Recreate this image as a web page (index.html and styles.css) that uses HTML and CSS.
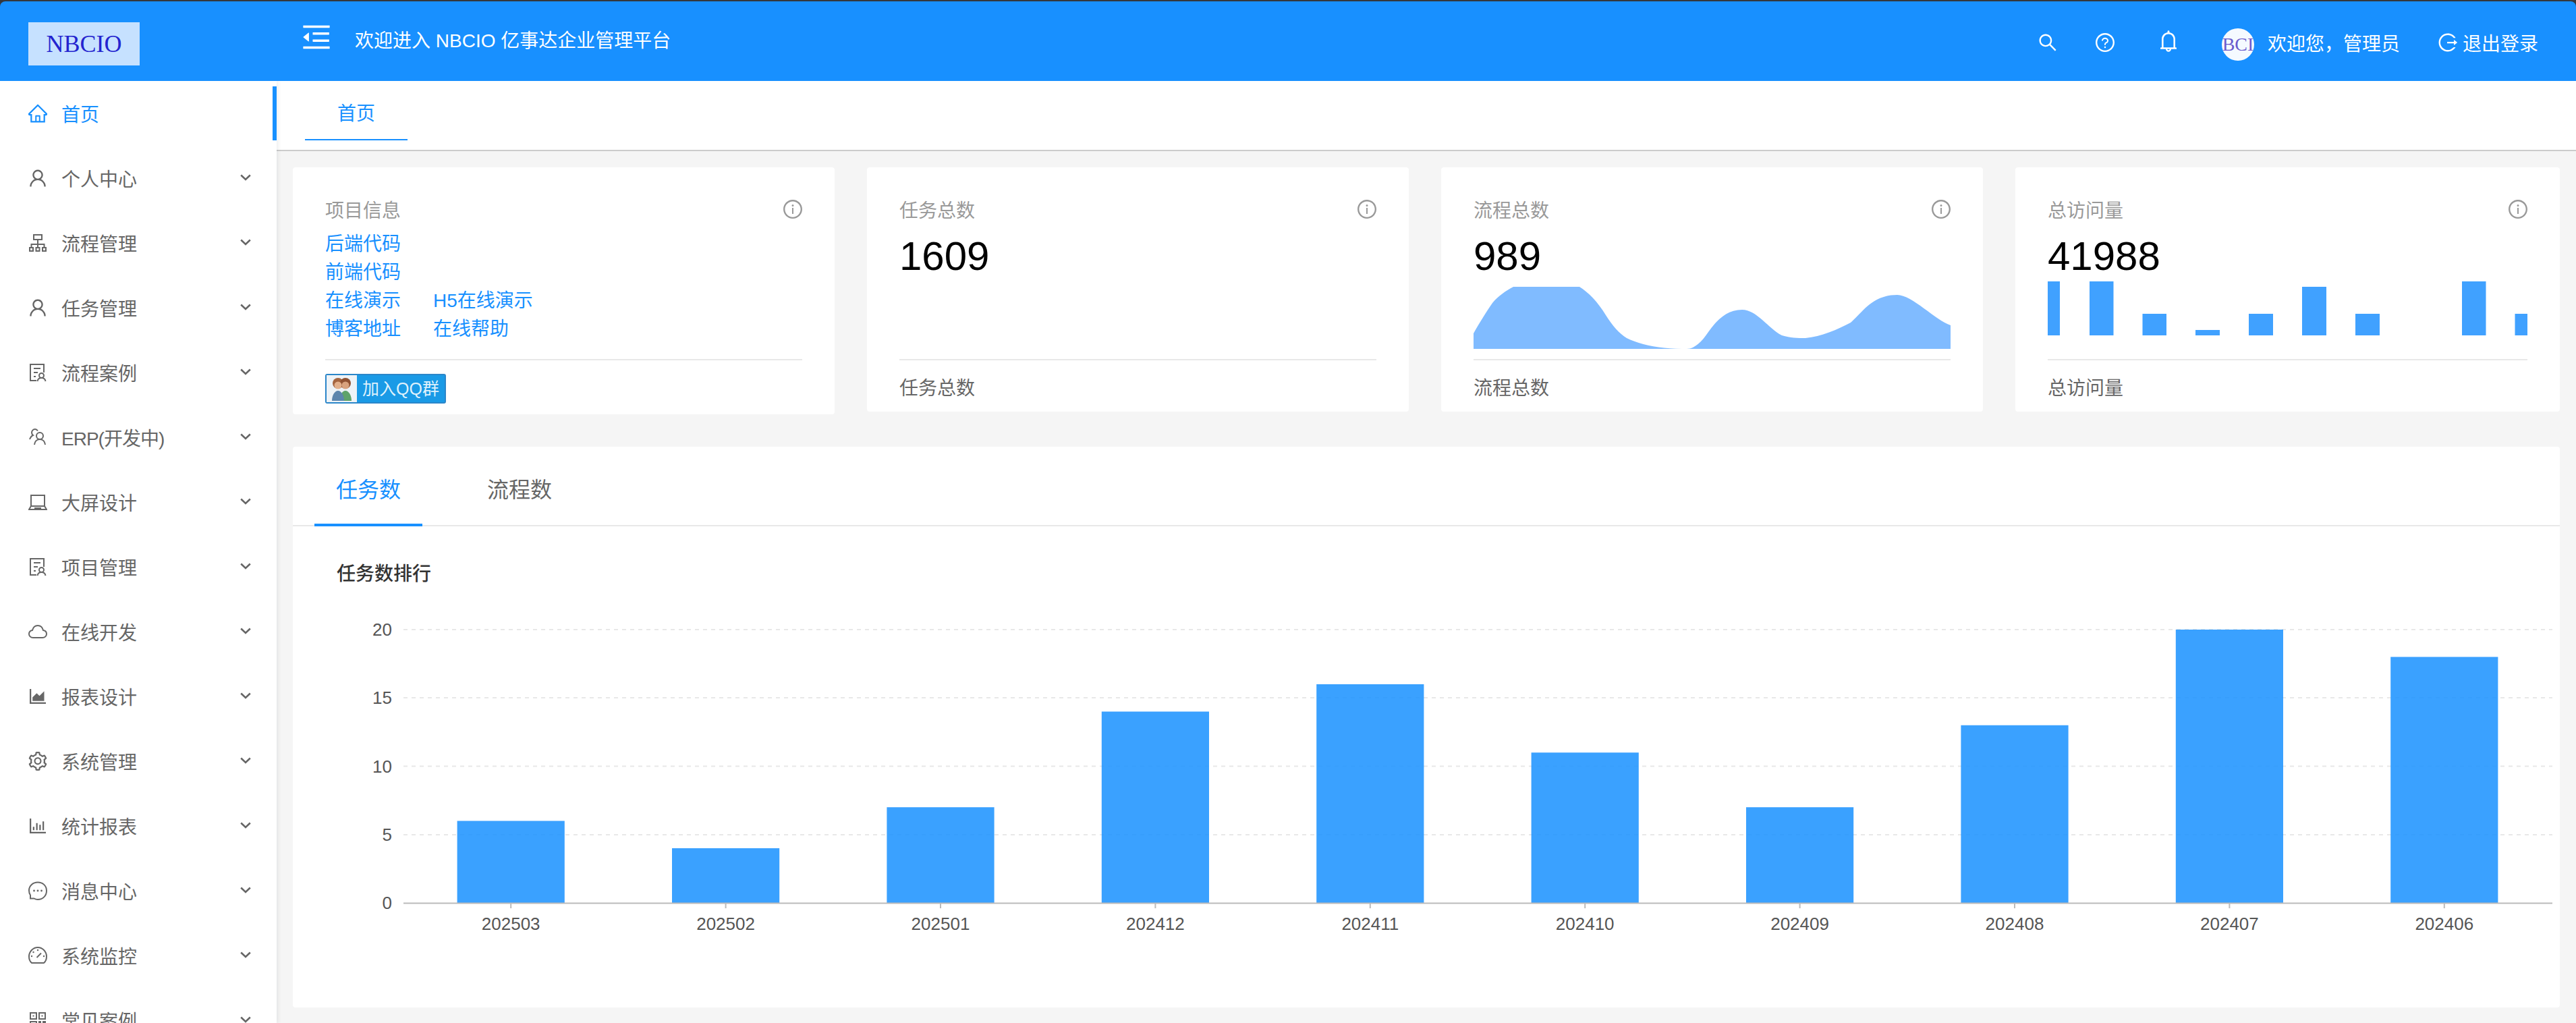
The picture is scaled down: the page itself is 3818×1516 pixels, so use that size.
FILE: index.html
```html
<!DOCTYPE html>
<html>
<head>
	<meta charset="utf-8">
	<title>NBCIO 亿事达企业管理平台</title>
	<link rel="stylesheet" href="styles.css">
</head>
<body>

	<!-- icon sprite -->
	<svg class="sprite" xmlns="http://www.w3.org/2000/svg">
		<symbol id="i-home" viewBox="64 64 896 896"><path d="M946.5 505L560.1 118.8l-25.9-25.9a31.5 31.5 0 0 0-44.4 0L77.5 505a63.9 63.9 0 0 0-18.8 46c.4 35.2 29.7 63.3 64.9 63.3h42.5V940h691.8V614.3h43.4c17.1 0 33.2-6.7 45.3-18.8a63.6 63.6 0 0 0 18.7-45.3c0-17-6.7-33.1-18.8-45.2zM568 868H456V664h112v204zm217.9-325.7V868H632V640c0-22.1-17.9-40-40-40H432c-22.1 0-40 17.9-40 40v228H238.1V542.3h-96l370-369.7 23.1 23.1L882 542.3h-96.1z"/></symbol>
		<symbol id="i-user" viewBox="64 64 896 896"><path d="M858.5 763.6a374 374 0 0 0-80.6-119.5 375.63 375.63 0 0 0-119.5-80.6c-.4-.2-.8-.3-1.2-.5C719.5 518 760 444.7 760 362c0-137-111-248-248-248S264 225 264 362c0 82.7 40.5 156 102.8 201.1-.4.2-.8.3-1.2.5-44.8 18.9-85 46-119.5 80.6a375.63 375.63 0 0 0-80.6 119.5A371.7 371.7 0 0 0 136 901.8a8 8 0 0 0 8 8.2h60c4.4 0 7.9-3.5 8-7.8 2-77.2 33-149.5 87.8-204.3 56.7-56.7 132-87.9 212.2-87.9s155.5 31.2 212.2 87.9C779 752.7 810 825 812 902.2c.1 4.4 3.6 7.8 8 7.8h60a8 8 0 0 0 8-8.2c-1-47.8-10.9-94.3-29.5-138.2zM512 534c-45.9 0-89.1-17.9-121.6-50.4S340 407.9 340 362c0-45.9 17.9-89.1 50.4-121.6S466.1 190 512 190s89.1 17.9 121.6 50.4S684 316.1 684 362c0 45.9-17.9 89.1-50.4 121.6S557.9 534 512 534z"/></symbol>
		<symbol id="i-apartment" viewBox="0 0 28 28"><path fill="none" stroke="currentColor" stroke-width="2" d="M8 2h12v7H8zM14 9v5M4.5 21v-5h19v5M14 14v7M2 21h5v5H2zM11.5 21h5v5h-5zM21 21h5v5h-5z"/></symbol>
		<symbol id="i-solution" viewBox="0 0 28 28"><path fill="none" stroke="currentColor" stroke-width="2" d="M12 26H3V2h20v12M8 8h10M8 14h6M8 20h3"/><circle cx="19.5" cy="18.5" r="3.5" fill="none" stroke="currentColor" stroke-width="2"/><path fill="none" stroke="currentColor" stroke-width="2" d="M13.5 27c.5-3 3-5 6-5s5.500 2 6 5"/></symbol>
		<symbol id="i-team" viewBox="0 0 28 28"><circle cx="17" cy="12" r="5" fill="none" stroke="currentColor" stroke-width="2"/><path fill="none" stroke="currentColor" stroke-width="2" d="M9 25c.5-4.500 3.500-8 8-8s7.500 3.500 8 8M14 4.500C13 3 11.500 2 10 2 7 2 5 4.500 5 7c0 1.500.5 3 2 4-2.500 1-4 3.500-5 6"/></symbol>
		<symbol id="i-laptop" viewBox="0 0 28 28"><path fill="none" stroke="currentColor" stroke-width="2" d="M4 20V4h20v16M1 25l3-5h20l3 5zM10 25v-2h8v2"/></symbol>
		<symbol id="i-cloud" viewBox="0 0 28 28"><path fill="none" stroke="currentColor" stroke-width="2" d="M7 23C3.500 23 1 20.500 1 17.500S3.500 12.500 6 12c1-4 4-7 8-7s7 3 8 7c3 .5 5 2.500 5 5.500S24.500 23 21 23z"/></symbol>
		<symbol id="i-area" viewBox="64 64 896 896"><path d="M888 792H200V168c0-4.400-3.600-8-8-8h-56c-4.400 0-8 3.600-8 8v688c0 4.400 3.600 8 8 8h752c4.400 0 8-3.600 8-8v-56c0-4.400-3.600-8-8-8zm-616-64h536c4.400 0 8-3.600 8-8V284c0-7.200-8.700-10.700-13.800-5.700L592 488.600l-125.400-124a8.030 8.030 0 0 0-11.300 0l-189 189.600a7.870 7.870 0 0 0-2.300 5.600V720c0 4.400 3.600 8 8 8z"/></symbol>
		<symbol id="i-setting" viewBox="64 64 896 896"><path d="M924.8 625.7l-65.5-56c3.100-19 4.700-38.400 4.700-57.800s-1.600-38.800-4.700-57.800l65.500-56a32.030 32.030 0 0 0 9.300-35.200l-.9-2.600a443.740 443.740 0 0 0-79.700-137.900l-1.800-2.100a32.120 32.120 0 0 0-35.100-9.500l-81.300 28.900c-30-24.600-63.500-44-99.700-57.600l-15.700-85a32.050 32.050 0 0 0-25.800-25.700l-2.700-.5c-52.100-9.400-106.900-9.400-159 0l-2.700.5a32.050 32.050 0 0 0-25.800 25.700l-15.800 85.400a351.860 351.860 0 0 0-99 57.400l-81.900-29.100a32 32 0 0 0-35.100 9.500l-1.800 2.100a446.020 446.020 0 0 0-79.700 137.900l-.9 2.600c-4.500 12.500-.8 26.500 9.300 35.200l66.300 56.600c-3.100 18.800-4.600 38-4.600 57.100 0 19.200 1.500 38.400 4.600 57.100L99 625.500a32.030 32.030 0 0 0-9.300 35.200l.9 2.600c18.100 50.400 44.900 96.900 79.700 137.900l1.800 2.100a32.120 32.120 0 0 0 35.100 9.500l81.900-29.100c29.800 24.500 63.100 43.900 99 57.400l15.800 85.400a32.050 32.050 0 0 0 25.800 25.700l2.700.5a449.400 449.400 0 0 0 159 0l2.700-.5a32.050 32.050 0 0 0 25.800-25.700l15.700-85a350 350 0 0 0 99.700-57.600l81.300 28.900a32 32 0 0 0 35.100-9.500l1.800-2.100c34.800-41.100 61.600-87.500 79.700-137.900l.9-2.600c4.500-12.300.8-26.300-9.300-35zM788.300 465.900c2.500 15.100 3.800 30.600 3.800 46.100s-1.300 31-3.800 46.100l-6.600 40.100 74.700 63.900a370.030 370.030 0 0 1-42.600 73.600L721 702.800l-31.400 25.800c-23.900 19.600-50.500 35-79.300 45.800l-38.100 14.300-17.900 97a377.500 377.500 0 0 1-85 0l-17.900-97.200-37.800-14.500c-28.500-10.800-55-26.200-78.700-45.700l-31.400-25.900-93.400 33.200c-17-22.900-31.200-47.600-42.600-73.600l75.500-64.500-6.500-40c-2.400-14.900-3.700-30.300-3.700-45.500 0-15.300 1.200-30.600 3.700-45.500l6.500-40-75.500-64.500c11.300-26.100 25.600-50.700 42.600-73.600l93.400 33.200 31.400-25.900c23.700-19.500 50.200-34.900 78.700-45.700l37.900-14.300 17.900-97.200c28.100-3.200 56.800-3.200 85 0l17.900 97 38.100 14.300c28.700 10.800 55.400 26.200 79.300 45.800l31.400 25.800 92.800-32.900c17 22.900 31.200 47.600 42.600 73.600L781.800 426l6.500 39.900zM512 326c-97.200 0-176 78.800-176 176s78.800 176 176 176 176-78.800 176-176-78.800-176-176-176zm79.200 255.200A111.600 111.600 0 0 1 512 614c-29.900 0-58-11.700-79.200-32.800A111.600 111.600 0 0 1 400 502c0-29.900 11.700-58 32.800-79.200C454 401.600 482.100 390 512 390c29.900 0 58 11.600 79.200 32.800A111.600 111.600 0 0 1 624 502c0 29.900-11.700 58-32.800 79.200z"/></symbol>
		<symbol id="i-bar" viewBox="64 64 896 896"><path d="M888 792H200V168c0-4.400-3.600-8-8-8h-56c-4.400 0-8 3.600-8 8v688c0 4.400 3.600 8 8 8h752c4.400 0 8-3.600 8-8v-56c0-4.400-3.600-8-8-8zm-600-80h56c4.400 0 8-3.600 8-8V560c0-4.400-3.600-8-8-8h-56c-4.400 0-8 3.600-8 8v144c0 4.400 3.600 8 8 8zm152 0h56c4.400 0 8-3.600 8-8V384c0-4.400-3.600-8-8-8h-56c-4.400 0-8 3.600-8 8v320c0 4.400 3.600 8 8 8zm152 0h56c4.400 0 8-3.600 8-8V462c0-4.400-3.600-8-8-8h-56c-4.400 0-8 3.600-8 8v242c0 4.400 3.600 8 8 8zm152 0h56c4.400 0 8-3.600 8-8V304c0-4.400-3.600-8-8-8h-56c-4.400 0-8 3.600-8 8v400c0 4.400 3.600 8 8 8z"/></symbol>
		<symbol id="i-message" viewBox="0 0 28 28"><path fill="none" stroke="currentColor" stroke-width="2" d="M14 1.500C6.800 1.500 1 6.800 1 13.500c0 3 .6 5 2 7v5h5.500c1.700 1 3.500 1.500 5.500 1.500 7.200 0 13-5.300 13-13S21.200 1.500 14 1.500z"/><circle cx="8.500" cy="14" r="1.400" fill="currentColor"/><circle cx="14" cy="14" r="1.400" fill="currentColor"/><circle cx="19.500" cy="14" r="1.400" fill="currentColor"/></symbol>
		<symbol id="i-dashboard" viewBox="0 0 28 28"><path fill="none" stroke="currentColor" stroke-width="2" d="M5 25C2.500 23 1 19 1 15.500 1 8 7 2 14 2s13 6 13 13.500c0 3.500-1.500 7.500-4 9.500z"/><path fill="none" stroke="currentColor" stroke-width="2" d="M12.500 17L19 10.500"/><circle cx="14" cy="6" r="1.200" fill="currentColor"/><circle cx="7.500" cy="9" r="1.200" fill="currentColor"/><circle cx="5" cy="15" r="1.200" fill="currentColor"/><circle cx="23" cy="15" r="1.200" fill="currentColor"/></symbol>
		<symbol id="i-qrcode" viewBox="0 0 28 28"><path fill="none" stroke="currentColor" stroke-width="2" d="M3 3h9v9H3zM16 3h9v9h-9zM3 16h9v9H3z"/><path fill="currentColor" d="M6.500 6.500h2v2h-2zM19.500 6.500h2v2h-2zM6.500 19.500h2v2h-2zM15 15h4v4h-4zM21 15h5v3h-5zM15 21h4v5h-4zM21 21h5v5h-5z"/></symbol>
		<symbol id="i-down" viewBox="0 0 16 12"><path fill="none" stroke="currentColor" stroke-width="2.600" d="M1.200 2.500L8 9l6.800-6.500"/></symbol>
		<symbol id="i-info" viewBox="64 64 896 896"><path d="M512 64C264.600 64 64 264.600 64 512s200.600 448 448 448 448-200.600 448-448S759.400 64 512 64zm0 820c-205.400 0-372-166.600-372-372s166.600-372 372-372 372 166.600 372 372-166.600 372-372 372z"/><path d="M464 336a48 48 0 1 0 96 0 48 48 0 1 0-96 0zm72 112h-48c-4.400 0-8 3.600-8 8v272c0 4.400 3.600 8 8 8h48c4.400 0 8-3.600 8-8V456c0-4.400-3.600-8-8-8z"/></symbol>
		<symbol id="i-outdent" viewBox="64 64 896 896"><path d="M408 442h480c4.400 0 8-3.600 8-8v-56c0-4.400-3.600-8-8-8H408c-4.400 0-8 3.600-8 8v56c0 4.400 3.600 8 8 8zm-8 204c0 4.400 3.600 8 8 8h480c4.400 0 8-3.600 8-8v-56c0-4.400-3.600-8-8-8H408c-4.400 0-8 3.600-8 8v56zm504-486H120c-4.400 0-8 3.600-8 8v56c0 4.400 3.600 8 8 8h784c4.400 0 8-3.600 8-8v-56c0-4.400-3.600-8-8-8zm0 632H120c-4.400 0-8 3.600-8 8v56c0 4.400 3.600 8 8 8h784c4.400 0 8-3.600 8-8v-56c0-4.400-3.600-8-8-8zM115.400 518.900L271.700 642c5.800 4.600 14.400.5 14.400-6.900V388.900c0-7.400-8.500-11.500-14.400-6.900L115.400 505.100a8.740 8.740 0 0 0 0 13.800z"/></symbol>
		<symbol id="i-search" viewBox="64 64 896 896"><path d="M909.600 854.500L649.900 594.800C690.200 542.700 712 479 712 412c0-80.200-31.300-155.400-87.900-212.100-56.600-56.700-132-87.900-212.100-87.900s-155.500 31.300-212.100 87.900C143.200 256.500 112 331.800 112 412c0 80.100 31.300 155.500 87.900 212.100C256.500 680.800 331.800 712 412 712c67 0 130.600-21.800 182.700-62l259.700 259.600a8.200 8.200 0 0 0 11.600 0l43.600-43.500a8.200 8.200 0 0 0 0-11.600zM570.400 570.400C528 612.700 471.800 636 412 636s-116-23.300-158.400-65.600C211.300 528 188 471.800 188 412s23.300-116.100 65.600-158.400C296 211.300 352.200 188 412 188s116.100 23.200 158.400 65.600S636 352.200 636 412s-23.300 116.100-65.600 158.400z"/></symbol>
		<symbol id="i-question" viewBox="64 64 896 896"><path d="M512 64C264.600 64 64 264.600 64 512s200.600 448 448 448 448-200.600 448-448S759.400 64 512 64zm0 820c-205.400 0-372-166.600-372-372s166.600-372 372-372 372 166.600 372 372-166.600 372-372 372z"/><path d="M623.600 316.700C593.600 290.400 554 276 512 276s-81.600 14.500-111.600 40.700C369.200 344 352 380.700 352 420v7.600c0 4.400 3.600 8 8 8h48c4.400 0 8-3.600 8-8V420c0-44.100 43.100-80 96-80s96 35.900 96 80c0 31.100-22 59.600-56.100 72.700-21.200 8.100-39.200 22.300-52.100 40.900-13.100 19-19.900 41.800-19.900 64.900V620c0 4.400 3.600 8 8 8h48c4.400 0 8-3.600 8-8v-22.700a48.300 48.300 0 0 1 30.900-44.800c59-22.700 97.100-74.700 97.100-132.500.1-39.300-17.100-76-48.300-103.300zM472 732a40 40 0 1 0 80 0 40 40 0 1 0-80 0z"/></symbol>
		<symbol id="i-bell" viewBox="64 64 896 896"><path d="M816 768h-24V428c0-141.100-104.300-257.700-240-277.100V112c0-22.100-17.900-40-40-40s-40 17.900-40 40v38.900c-135.700 19.400-240 136-240 277.100v340h-24c-17.700 0-32 14.300-32 32v32c0 4.400 3.600 8 8 8h216c0 61.800 50.200 112 112 112s112-50.200 112-112h216c4.400 0 8-3.600 8-8v-32c0-17.700-14.300-32-32-32zM512 888c-26.500 0-48-21.500-48-48h96c0 26.500-21.500 48-48 48zM304 768V428c0-55.600 21.600-107.800 60.900-147.100S456.400 220 512 220c55.600 0 107.800 21.600 147.100 60.900S720 372.400 720 428v340H304z"/></symbol>
		<symbol id="i-logout" viewBox="64 64 896 896"><path d="M868 732h-70.300c-4.800 0-9.300 2.100-12.300 5.800-7 8.500-14.500 16.700-22.400 24.500a353.840 353.840 0 0 1-112.700 75.900A352.800 352.800 0 0 1 512.400 866c-47.900 0-94.300-9.400-137.900-27.800a353.840 353.840 0 0 1-112.700-75.900 353.280 353.280 0 0 1-76-112.500C167.300 606.200 158 559.900 158 512s9.400-94.200 27.800-137.800c17.800-42.100 43.400-80 76-112.500s70.500-58.100 112.700-75.900c43.600-18.400 90-27.800 137.900-27.800 47.900 0 94.300 9.300 137.900 27.800 42.200 17.800 80.100 43.400 112.700 75.900 7.900 7.900 15.300 16.100 22.400 24.500 3 3.700 7.600 5.800 12.300 5.800H868c6.300 0 10.200-7 6.700-12.300C798 160.500 663.800 81.600 511.300 82 271.700 82.600 79.600 277.100 82 516.400 84.400 751.900 276.200 942 512.400 942c152.100 0 285.700-78.800 362.300-197.700 3.400-5.300-.4-12.300-6.700-12.300zm88.900-226.300L815 393.700c-5.300-4.200-13-.4-13 6.300v76H488c-4.400 0-8 3.600-8 8v56c0 4.400 3.600 8 8 8h314v76c0 6.700 7.800 10.500 13 6.300l141.900-112a8 8 0 0 0 0-12.600z"/></symbol>
	</svg>

	<!-- top bar -->
	<header class="topbar">
		<div class="logo-box"><span class="logo">NBCIO</span></div>
		<svg class="ico-fold"><use href="#i-outdent"/></svg>
		<div class="welcome">欢迎进入 NBCIO 亿事达企业管理平台</div>
		<div class="actions">
			<svg class="ico-28"><use href="#i-search"/></svg>
			<svg class="ico-28 act-help"><use href="#i-question"/></svg>
			<svg class="ico-bell"><use href="#i-bell"/></svg>
			<div class="avatar"><span>NBCIO</span></div>
			<span class="hello">欢迎您，管理员</span>
			<svg class="ico-28 act-logout"><use href="#i-logout"/></svg>
			<span class="logout-text">退出登录</span>
		</div>
	</header>

	<div class="layout">
		<!-- left menu -->
		<nav class="sider">
			<a class="menu-item active"><svg class="menu-ico"><use href="#i-home"/></svg>首页</a>
			<a class="menu-item"><svg class="menu-ico"><use href="#i-user"/></svg>个人中心<svg class="arrow"><use href="#i-down"/></svg></a>
			<a class="menu-item"><svg class="menu-ico"><use href="#i-apartment"/></svg>流程管理<svg class="arrow"><use href="#i-down"/></svg></a>
			<a class="menu-item"><svg class="menu-ico"><use href="#i-user"/></svg>任务管理<svg class="arrow"><use href="#i-down"/></svg></a>
			<a class="menu-item"><svg class="menu-ico"><use href="#i-solution"/></svg>流程案例<svg class="arrow"><use href="#i-down"/></svg></a>
			<a class="menu-item tight"><svg class="menu-ico"><use href="#i-team"/></svg>ERP(开发中)<svg class="arrow"><use href="#i-down"/></svg></a>
			<a class="menu-item"><svg class="menu-ico"><use href="#i-laptop"/></svg>大屏设计<svg class="arrow"><use href="#i-down"/></svg></a>
			<a class="menu-item"><svg class="menu-ico"><use href="#i-solution"/></svg>项目管理<svg class="arrow"><use href="#i-down"/></svg></a>
			<a class="menu-item"><svg class="menu-ico"><use href="#i-cloud"/></svg>在线开发<svg class="arrow"><use href="#i-down"/></svg></a>
			<a class="menu-item"><svg class="menu-ico"><use href="#i-area"/></svg>报表设计<svg class="arrow"><use href="#i-down"/></svg></a>
			<a class="menu-item"><svg class="menu-ico"><use href="#i-setting"/></svg>系统管理<svg class="arrow"><use href="#i-down"/></svg></a>
			<a class="menu-item"><svg class="menu-ico"><use href="#i-bar"/></svg>统计报表<svg class="arrow"><use href="#i-down"/></svg></a>
			<a class="menu-item"><svg class="menu-ico"><use href="#i-message"/></svg>消息中心<svg class="arrow"><use href="#i-down"/></svg></a>
			<a class="menu-item"><svg class="menu-ico"><use href="#i-dashboard"/></svg>系统监控<svg class="arrow"><use href="#i-down"/></svg></a>
			<a class="menu-item"><svg class="menu-ico"><use href="#i-qrcode"/></svg>常见案例<svg class="arrow"><use href="#i-down"/></svg></a>
		</nav>

		<main class="main">
			<div class="page-tabs"><span class="page-tab">首页</span></div>

			<div class="content">
				<!-- four stat cards -->
				<section class="stats">
					<div class="card">
						<div class="card-head"><span>项目信息</span><svg class="ico-info"><use href="#i-info"/></svg></div>
						<div class="card-body links">
							<div class="link-row"><a>后端代码</a></div>
							<div class="link-row"><a>前端代码</a></div>
							<div class="link-row"><a>在线演示</a><a>H5在线演示</a></div>
							<div class="link-row"><a>博客地址</a><a>在线帮助</a></div>
						</div>
						<div class="card-foot foot-badge">
							<span class="qq-badge">
								<svg class="qq-face" viewBox="0 0 45 40">
									<rect width="45" height="40" fill="#eef3f7"/>
									<circle cx="17" cy="12" r="8" fill="#a5653f"/>
									<circle cx="28" cy="12" r="8" fill="#8f5233"/>
									<circle cx="17" cy="15" r="5.500" fill="#e2b08c"/>
									<circle cx="28" cy="15" r="5.500" fill="#d8a27e"/>
									<path d="M19 38c0-8 4-15 9-15s9 7 9 15z" fill="#5fa36a"/>
									<path d="M8 38c0-8 4-15 9-15s9 7 9 15z" fill="#5d86ad"/>
								</svg>
								<span class="qq-text">加入QQ群</span>
							</span>
						</div>
					</div>

					<div class="card">
						<div class="card-head"><span>任务总数</span><svg class="ico-info"><use href="#i-info"/></svg></div>
						<div class="card-body">
							<div class="stat-value">1609</div>
						</div>
						<div class="card-foot">任务总数</div>
					</div>

					<div class="card">
						<div class="card-head"><span>流程总数</span><svg class="ico-info"><use href="#i-info"/></svg></div>
						<div class="card-body">
							<div class="stat-value">989</div>
							<svg class="mini-area" viewBox="0 0 707 92" preserveAspectRatio="none">
								<path fill="#80bbff" d="M0 69C9 53 19 37 28 24 37 13 48 6 59 0H157C170 8 184 22 196 42 206 58 216 69 227 76 245 85 275 92 309 92H316C327 92 338 82 348 67 360 50 375 34 398 34 420 34 437 62 457 72 470 76 480 76 492 76 515 74 540 63 559 53 575 40 590 12 628 12 650 12 685 50 707 57V92H0Z"/>
							</svg>
						</div>
						<div class="card-foot">流程总数</div>
					</div>

					<div class="card">
						<div class="card-head"><span>总访问量</span><svg class="ico-info"><use href="#i-info"/></svg></div>
						<div class="card-body">
							<div class="stat-value">41988</div>
							<svg class="mini-bars" viewBox="3035 417 711 80" preserveAspectRatio="none">
								<g fill="#40a1ff">
									<rect x="3035" y="417" width="18" height="80"/>
									<rect x="3097" y="417" width="35.500" height="80"/>
									<rect x="3175.500" y="465" width="35.500" height="32"/>
									<rect x="3254" y="489" width="36" height="8"/>
									<rect x="3333" y="465" width="36" height="32"/>
									<rect x="3412" y="425" width="36" height="72"/>
									<rect x="3491" y="465" width="36" height="32"/>
									<rect x="3649" y="417" width="35.500" height="80"/>
									<rect x="3727.500" y="465" width="18.500" height="32"/>
								</g>
							</svg>
						</div>
						<div class="card-foot">总访问量</div>
					</div>
				</section>

				<!-- ranking chart -->
				<section class="chart-card">
					<div class="chart-tabs">
						<span class="chart-tab on">任务数</span>
						<span class="chart-tab">流程数</span>
					</div>
					<h4 class="chart-title">任务数排行</h4>
					<svg class="bar-chart" viewBox="434 869 3360 624">
						<g class="grid">
							<line x1="598" x2="3783" y1="933" y2="933"/>
							<line x1="598" x2="3783" y1="1034" y2="1034"/>
							<line x1="598" x2="3783" y1="1135.500" y2="1135.500"/>
							<line x1="598" x2="3783" y1="1237" y2="1237"/>
						</g>
						<g class="y-labels">
							<text x="581" y="942">20</text>
							<text x="581" y="1043">15</text>
							<text x="581" y="1144.500">10</text>
							<text x="581" y="1246">5</text>
							<text x="581" y="1347">0</text>
						</g>
						<g class="bars">
							<rect x="677.600" y="1216.500" width="159.200" height="121.500"/>
							<rect x="996" y="1257" width="159.200" height="81"/>
							<rect x="1314.400" y="1196.250" width="159.200" height="141.750"/>
							<rect x="1632.800" y="1054.500" width="159.200" height="283.500"/>
							<rect x="1951.200" y="1014" width="159.200" height="324"/>
							<rect x="2269.600" y="1115.250" width="159.200" height="222.750"/>
							<rect x="2588" y="1196.250" width="159.200" height="141.750"/>
							<rect x="2906.400" y="1074.750" width="159.200" height="263.250"/>
							<rect x="3224.800" y="933" width="159.200" height="405"/>
							<rect x="3543.200" y="973.500" width="159.200" height="364.500"/>
						</g>
						<line class="axis" x1="598" x2="3783" y1="1338.500" y2="1338.500"/>
						<path class="ticks" d="M757.200 1339v7M1075.600 1339v7M1394 1339v7M1712.400 1339v7M2030.800 1339v7M2349.200 1339v7M2667.600 1339v7M2986 1339v7M3304.400 1339v7M3622.800 1339v7"/>
						<g class="x-labels">
							<text x="757.200" y="1378">202503</text>
							<text x="1075.600" y="1378">202502</text>
							<text x="1394" y="1378">202501</text>
							<text x="1712.400" y="1378">202412</text>
							<text x="2030.800" y="1378">202411</text>
							<text x="2349.200" y="1378">202410</text>
							<text x="2667.600" y="1378">202409</text>
							<text x="2986" y="1378">202408</text>
							<text x="3304.400" y="1378">202407</text>
							<text x="3622.800" y="1378">202406</text>
						</g>
					</svg>
				</section>
			</div>
		</main>
	</div>

</body>
</html>
```

FILE: styles.css
```css
html, body {
	margin: 0;
	height: 1516px;
	overflow: hidden;
}
body {
	background: #35373c;
	font-family: "Liberation Sans", "Noto Sans CJK SC", sans-serif;
	font-size: 28px;
	color: #666;
}
svg {
	fill: currentColor;
	display: block;
	flex: none;
}
.sprite {
	width: 0;
	height: 0;
	position: absolute;
}

/* top bar */
.topbar {
	display: flex;
	align-items: center;
	height: 118px;
	margin-top: 2px;
	background: #1890ff;
	border-radius: 8px 8px 0 0;
	color: #fff;
	position: relative;
	z-index: 2;
}
.logo-box {
	width: 410px;
	padding-left: 42px;
	box-sizing: border-box;
	margin-top: 8px;
}
.logo {
	display: block;
	width: 165px;
	height: 64px;
	line-height: 64px;
	text-align: center;
	background: #c6e1ff;
	color: #2424cf;
	font-family: "Liberation Serif", serif;
	font-size: 36px;
}
.ico-fold {
	width: 44px;
	height: 44px;
	margin: 0 0 12px 37px;
}
.welcome {
	margin-left: 35px;
	line-height: 40px;
}
.actions {
	display: flex;
	align-items: center;
	margin-left: auto;
	padding: 4px 56px 0 0;
}
.ico-28 {
	width: 28px;
	height: 28px;
}
.act-help {
	margin-left: 57px;
}
.ico-bell {
	width: 32px;
	height: 32px;
	margin: 0 0 4px 64px;
}
.avatar {
	display: flex;
	justify-content: center;
	align-items: center;
	width: 48px;
	height: 48px;
	margin: 6px 0 0 63px;
	border-radius: 50%;
	overflow: hidden;
	background: #f5faff;
	color: #6a5acd;
	font-family: "Liberation Serif", serif;
	white-space: nowrap;
}
.hello {
	margin-left: 20px;
}
.act-logout {
	margin-left: 57px;
}
.logout-text {
	margin-left: 8px;
}

/* layout */
.layout {
	display: flex;
	height: 1396px;
}
.sider {
	width: 410px;
	flex: none;
	background: #fff;
	box-shadow: 2px 0 6px rgba(0, 21, 41, .08);
	overflow: hidden;
	position: relative;
	z-index: 1;
}
.menu-item {
	display: flex;
	align-items: center;
	height: 80px;
	margin: 8px 0 16px;
	padding: 0 38px 0 42px;
	color: #666;
}
.menu-item.active {
	color: #1890ff;
	box-shadow: inset -6px 0 0 #1890ff;
}
.menu-item.tight {
	letter-spacing: -1px;
}
.menu-ico {
	width: 28px;
	height: 28px;
	margin-right: 21px;
}
.arrow {
	width: 16px;
	height: 12px;
	margin: -2px 0 0 auto;
}
.main {
	flex: 1;
	min-width: 0;
	background: #f5f5f5;
}

/* opened page tabs */
.page-tabs {
	height: 102px;
	padding-left: 42px;
	background: #fff;
	border-bottom: 2px solid #ccc;
}
.page-tab {
	display: block;
	width: 152px;
	padding-top: 12px;
	line-height: 74px;
	text-align: center;
	color: #1890ff;
	border-bottom: 2px solid #1890ff;
}

/* cards */
.content {
	padding: 24px 24px 0;
}
.stats {
	display: grid;
	grid-template-columns: 803px 803px 803px 1fr;
	column-gap: 48px;
	align-items: start;
}
.card {
	background: #fff;
	border-radius: 4px;
	padding: 40px 48px 0;
}
.card-head {
	display: flex;
	justify-content: space-between;
	align-items: center;
	height: 44px;
	color: #999;
}
.ico-info {
	width: 28px;
	height: 28px;
}
.card-body {
	height: 200px;
	border-bottom: 2px solid #e8e8e8;
}
.stat-value {
	padding-top: 10px;
	height: 74px;
	line-height: 76px;
	font-size: 60px;
	color: #000;
}
.mini-area {
	width: 100%;
	height: 92px;
	margin-top: 9px;
}
.mini-bars {
	width: 100%;
	height: 80px;
	margin-top: 1px;
}
.links {
	padding-top: 9px;
	height: 191px;
}
.link-row {
	display: flex;
	gap: 48px;
	line-height: 42px;
	color: #1890ff;
}
.card-foot {
	padding: 22px 0 14px;
	line-height: 40px;
	color: #666;
}
.foot-badge {
	padding: 20px 0 16px;
	line-height: 0;
}
.qq-badge {
	display: flex;
	align-items: center;
	width: 179px;
	height: 44px;
	box-sizing: border-box;
	border: 2px solid #2b86c9;
	border-radius: 3px;
	background: #1a9ae6;
}
.qq-face {
	width: 45px;
	height: 40px;
}
.qq-text {
	margin-left: 8px;
	font-size: 25px;
	line-height: 40px;
	color: #dff1fc;
	white-space: nowrap;
}

/* ranking chart card */
.chart-card {
	margin-top: 48px;
	height: 831px;
	background: #fff;
	border-radius: 4px;
}
.chart-tabs {
	display: flex;
	height: 116px;
	padding-left: 32px;
	border-bottom: 2px solid #e8e8e8;
}
.chart-tab {
	width: 160px;
	height: 100px;
	padding-top: 14px;
	line-height: 100px;
	text-align: center;
	font-size: 32px;
	color: #666;
	margin-right: 64px;
}
.chart-tab.on {
	color: #1890ff;
	border-bottom: 4px solid #1890ff;
}
.chart-title {
	margin: 52px 0 0 65px;
	line-height: 37px;
	font-size: 28px;
	font-weight: 500;
	color: #333;
}
.bar-chart {
	width: 3360px;
	height: 624px;
	font-size: 26px;
	fill: #555;
}
.grid line {
	stroke: #e8e8e8;
	stroke-width: 2;
	stroke-dasharray: 6 6;
}
.y-labels text {
	text-anchor: end;
}
.x-labels text {
	text-anchor: middle;
}
.bars rect {
	fill: #1890ff;
	fill-opacity: .85;
}
.axis, .ticks {
	stroke: #bbb;
	stroke-width: 2;
	fill: none;
}
```
